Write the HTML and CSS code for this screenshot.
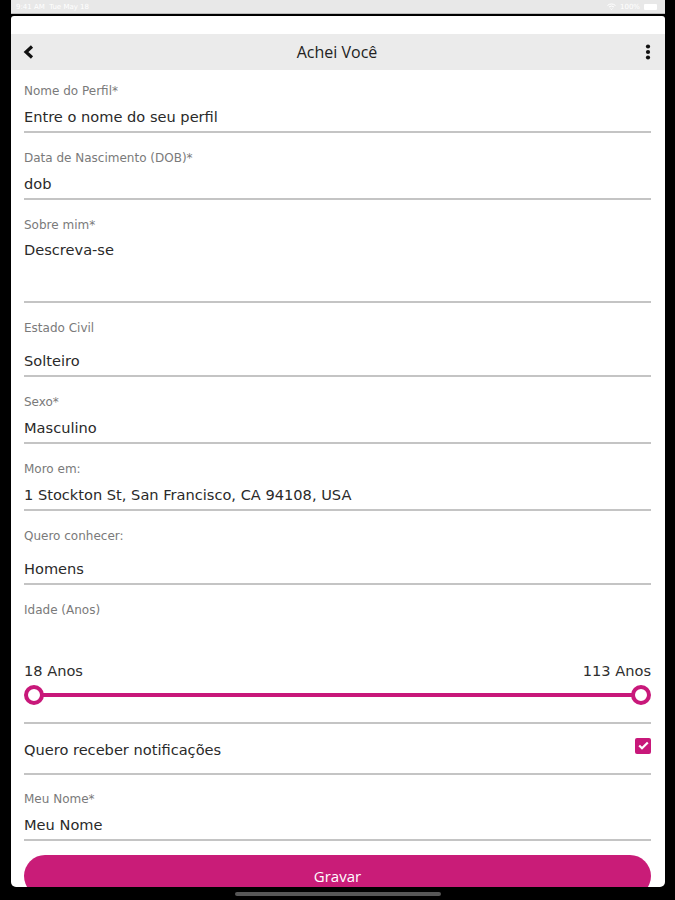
FILE: index.html
```html
<!DOCTYPE html>
<html lang="pt">
<head>
<meta charset="utf-8">
<title>Achei Você</title>
<link rel="stylesheet" href="styles.css">
</head>
<body>
<div class="device">
  <div class="statusbar">
    <span class="time">9:41 AM&nbsp;&nbsp;Tue May 18</span>
    <span class="sys">
      <svg width="9" height="7" viewBox="0 0 9 7"><path d="M0.5 2.5a6 6 0 0 1 8 0M2 4a4 4 0 0 1 5 0M3.5 5.5l1 1 1-1" stroke="#fff" fill="none" stroke-width="1"/></svg>
      <span class="pct">100%</span>
      <span class="batt"></span>
    </span>
  </div>
  <div class="card">
    <div class="topgap"></div>
    <header class="navbar">
      <svg class="back" width="12" height="14" viewBox="0 0 12 14"><path d="M9 1.5 3 7l6 5.5" stroke="#111" stroke-width="3.2" fill="none" stroke-linejoin="miter"/></svg>
      <h1 class="title">Achei Você</h1>
      <svg class="menu" width="6" height="16" viewBox="0 0 6 16"><circle cx="3" cy="2.5" r="2.1" fill="#111"/><circle cx="3" cy="8" r="2.1" fill="#111"/><circle cx="3" cy="13.5" r="2.1" fill="#111"/></svg>
    </header>
    <form class="form">
      <div class="field first">
        <label class="lbl">Nome do Perfil*</label>
        <div class="val">Entre o nome do seu perfil</div>
      </div>
      <div class="field">
        <label class="lbl">Data de Nascimento (DOB)*</label>
        <div class="val">dob</div>
      </div>
      <div class="field area">
        <label class="lbl">Sobre mim*</label>
        <div class="val">Descreva-se</div>
      </div>
      <div class="field picker">
        <label class="lbl">Estado Civil</label>
        <div class="val">Solteiro</div>
      </div>
      <div class="field">
        <label class="lbl">Sexo*</label>
        <div class="val">Masculino</div>
      </div>
      <div class="field">
        <label class="lbl">Moro em:</label>
        <div class="val">1 Stockton St, San Francisco, CA 94108, USA</div>
      </div>
      <div class="field picker">
        <label class="lbl">Quero conhecer:</label>
        <div class="val">Homens</div>
      </div>
      <div class="field range">
        <label class="lbl">Idade (Anos)</label>
        <div class="range-labels"><span>18 Anos</span><span>113 Anos</span></div>
        <div class="slider">
          <span class="track"></span>
          <span class="thumb"></span>
          <span class="thumb"></span>
        </div>
      </div>
      <div class="field toggle">
        <span class="val">Quero receber notificações</span>
        <span class="check"><svg width="11" height="9" viewBox="0 0 11 9"><path d="M1.2 4.5 4 7.3 9.8 1.5" stroke="#fff" stroke-width="2.2" fill="none"/></svg></span>
      </div>
      <div class="field last">
        <label class="lbl">Meu Nome*</label>
        <div class="val">Meu Nome</div>
      </div>
      <button type="button" class="save">Gravar</button>
    </form>
  </div>
  <div class="home"></div>
</div>
</body>
</html>
```

FILE: styles.css
```css
* { box-sizing: border-box; }
html, body { margin: 0; padding: 0; }
body {
  width: 675px;
  height: 900px;
  overflow: hidden;
  background: #000;
  font-family: "DejaVu Sans", Verdana, sans-serif;
  color: #222;
}
.device {
  padding: 0 10px 0 11px;
  display: flex;
  flex-direction: column;
  height: 900px;
}
.statusbar {
  height: 14px;
  background: #e8e8e8;
  border-bottom: 1px solid #bdbdbd;
  display: flex;
  justify-content: space-between;
  align-items: center;
  padding: 0 8px 0 5px;
  font-size: 7px;
  color: #fff;
}
.statusbar .sys { display: flex; align-items: center; gap: 4px; }
.batt { width: 13px; height: 6px; background: #fff; border-radius: 1px; }
.card {
  margin-top: 2px;
  background: #fff;
  border-radius: 3px 3px 5px 5px;
  height: 871px;
  overflow: hidden;
  display: flex;
  flex-direction: column;
}
.topgap { height: 18px; flex: none; }
.navbar {
  flex: none;
  height: 36px;
  background: #ebebeb;
  display: flex;
  align-items: center;
  justify-content: space-between;
  padding: 0 14px 0 12px;
}
.title {
  margin: 0;
  font-family: "Open Sans", "DejaVu Sans", sans-serif;
  font-size: 16px;
  font-weight: 400;
  color: #222;
  transform: translateX(-3px);
}
.form {
  padding: 0 14px 0 13px;
  display: flex;
  flex-direction: column;
}
.field {
  display: flex;
  flex-direction: column;
  padding-top: 17px;
  padding-bottom: 4px;
  border-bottom: 2px solid #c4c4c4;
}
.field.first { padding-top: 13px; }
.lbl {
  font-size: 12px;
  line-height: 16px;
  color: #7a7a7a;
}
.val {
  margin-top: 8px;
  font-size: 14.6px;
  line-height: 20px;
  color: #2a2a2a;
}
.field.area { padding-bottom: 41px; }
.field.area .val { margin-top: 7px; }
.field.picker .val { margin-top: 15px; }
.field.range { padding-bottom: 15px; }
.range-labels {
  margin-top: 45px;
  display: flex;
  justify-content: space-between;
  font-size: 14.6px;
  line-height: 16px;
  color: #2e2e2e;
}
.slider {
  margin-top: 4px;
  height: 24px;
  display: flex;
  align-items: center;
  justify-content: space-between;
  position: relative;
}
.track {
  position: absolute;
  left: 8px;
  right: 8px;
  top: 10px;
  height: 4px;
  background: #c8187a;
}
.thumb {
  position: relative;
  width: 20px;
  height: 20px;
  border-radius: 50%;
  border: 4.5px solid #c8187a;
  background: #fff;
}
.field.toggle {
  flex-direction: row;
  justify-content: space-between;
  align-items: center;
  padding-top: 16px;
  padding-bottom: 13px;
}
.field.toggle .val { margin-top: 0; }
.check {
  width: 16px;
  height: 16px;
  background: #c8187a;
  border-radius: 2px;
  display: flex;
  align-items: center;
  justify-content: center;
  margin-top: -9px;
}
.field.last { padding-top: 16px; }
.save {
  margin-top: 14px;
  height: 42px;
  border: none;
  border-radius: 21px;
  background: #c91c78;
  color: #fff;
  font-family: "Open Sans", "DejaVu Sans", sans-serif;
  font-size: 15px;
  padding: 0;
}
.home {
  margin: 5px auto 0;
  width: 206px;
  height: 4px;
  border-radius: 2px;
  background: #575757;
}
```
